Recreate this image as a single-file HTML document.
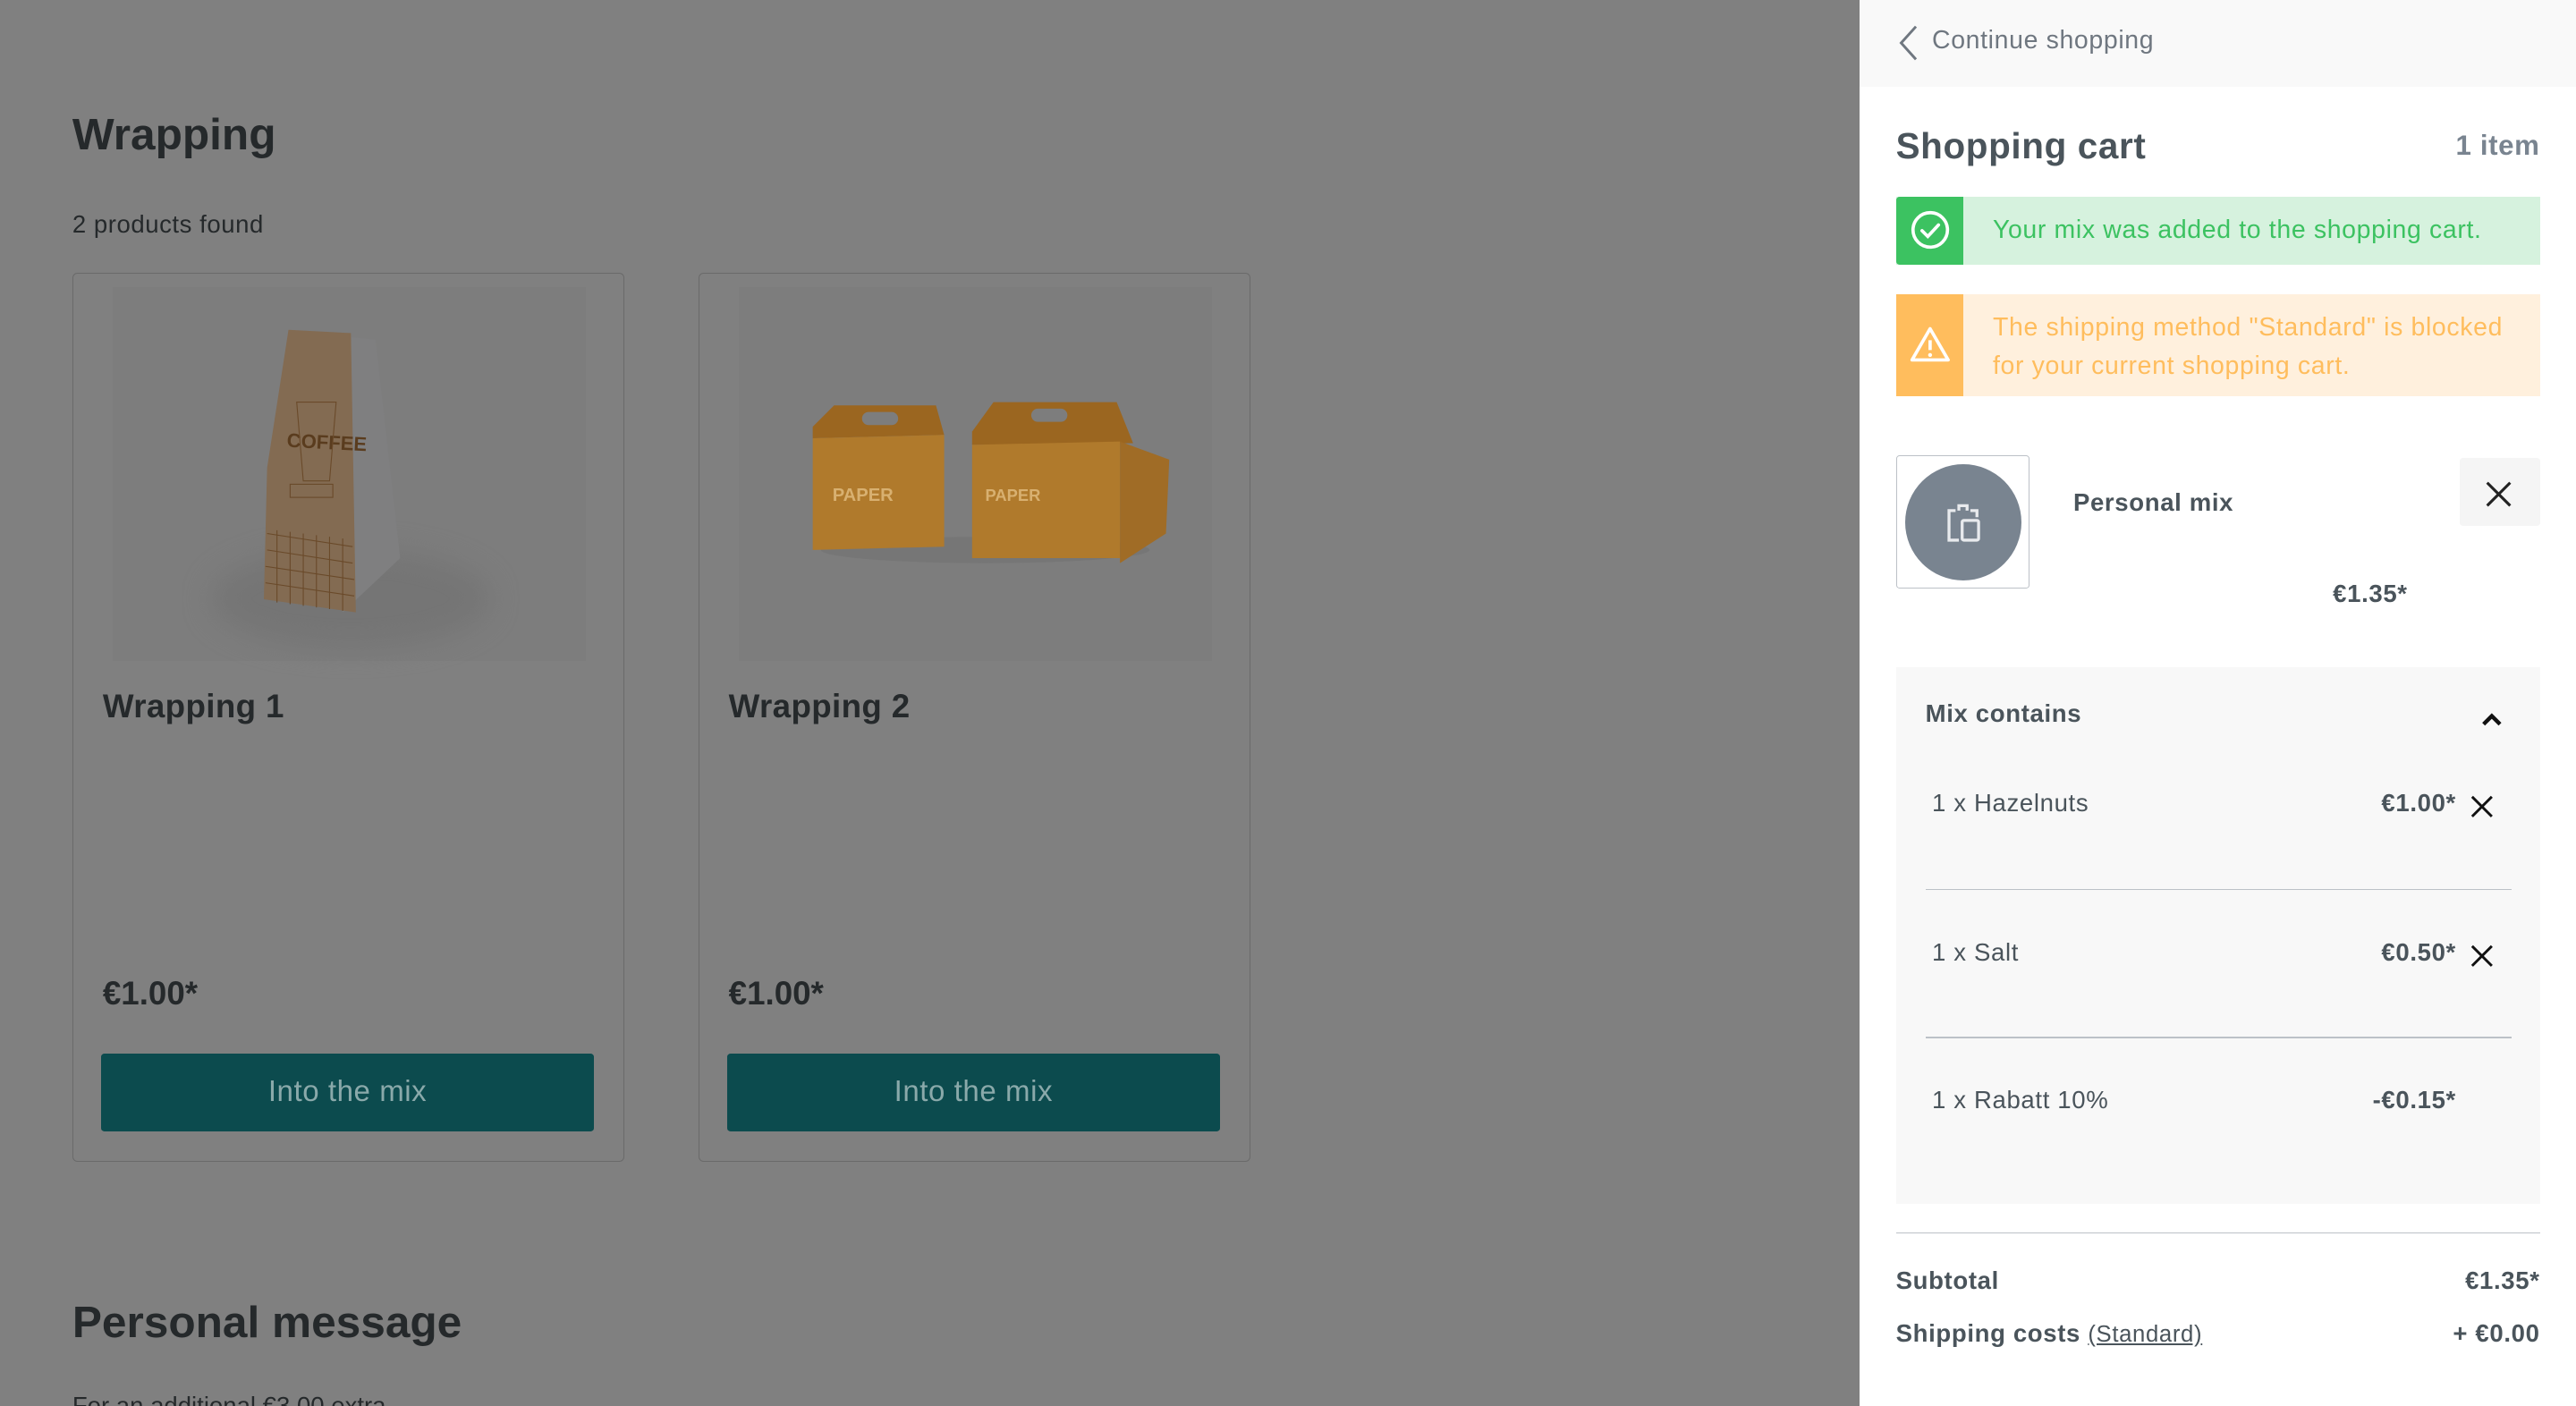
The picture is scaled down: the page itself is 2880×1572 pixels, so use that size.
<!DOCTYPE html>
<html style="background:#808080;overflow:hidden;height:1572px"><head><meta charset="utf-8"><style>
html,body{margin:0;padding:0;}
body{width:1568px;height:856px;overflow:hidden;zoom:1.83674;position:relative;background:#808080;font-family:"Liberation Sans",sans-serif;}
.a{position:absolute;white-space:nowrap;}
.dk{color:#25292b;}
.card{position:absolute;top:166px;width:335px;height:540px;border:1px solid #6a6a6a;border-radius:3px;}
.img{position:absolute;left:24px;top:8px;width:288px;height:228px;background:#7d7d7d;}
.btn{position:absolute;left:17px;top:475px;width:300px;height:47px;background:#0c4b4e;border-radius:2px;color:#8aa9aa;font-size:18px;text-align:center;line-height:47px;letter-spacing:0.3px;}
.panel{position:absolute;left:1132px;top:0;width:436px;height:870px;background:#fff;letter-spacing:0.35px;}
.g{color:#4a545b;}
</style></head><body>
<div class="a dk" style="left:44px;top:66px;font-size:27px;font-weight:bold;">Wrapping</div>
<div class="a dk" style="left:44px;top:128px;font-size:15px;letter-spacing:0.3px;">2 products found</div>

<div class="card" style="left:44px;">
 <div class="img">
  <div style="position:absolute;left:60px;top:160px;width:170px;height:60px;border-radius:50%;background:#757575;filter:blur(8px);"></div>
  <svg width="288" height="228" style="position:absolute;left:0;top:0">
   <polygon points="140,30 160,32 175,165 140,198" fill="#7f7f80"/>
   <polygon points="107,26 145,28 148,198 92,190 94,110" fill="#836b52"/>
   <text x="106" y="98" font-size="12" font-weight="bold" fill="#5a3c1e" font-family="Liberation Sans" transform="rotate(3 120 95)">COFFEE</text>
   <g stroke="#6a4a2a" stroke-width="0.6" fill="none">
    <path d="M94 150 L146 158 M94 160 L146 168 M93 170 L147 178 M93 180 L147 188"/>
    <path d="M100 148 V192 M108 149 V193 M116 150 V194 M124 151 V195 M132 152 V196 M140 153 V197"/>
    <rect x="108" y="120" width="26" height="8"/>
    <path d="M112 70 h24 l-4 48 h-16 z"/>
   </g>
  </svg>
 </div>
 <div class="a dk" style="left:18px;top:252px;font-size:20px;font-weight:bold;letter-spacing:0.2px;">Wrapping 1</div>
 <div class="a dk" style="left:18px;top:427px;font-size:20px;font-weight:bold;">€1.00*</div>
 <div class="btn">Into the mix</div>
</div>

<div class="card" style="left:425px;">
 <div class="img">
  <svg width="288" height="228" style="position:absolute;left:0;top:0">
   <ellipse cx="150" cy="160" rx="100" ry="8" fill="#767676"/>
   <polygon points="45,85 58,72 120,72 125,90 45,92" fill="#9b6620"/>
   <polygon points="45,92 125,90 125,158 45,160" fill="#b07a2c"/>
   <rect x="75" y="76" width="22" height="8" rx="4" fill="#7d7d7d"/>
   <polygon points="142,88 155,70 230,70 240,95 142,96" fill="#9b6620"/>
   <polygon points="142,96 232,94 232,165 142,165" fill="#b07a2c"/>
   <polygon points="232,94 262,105 260,150 232,168" fill="#a06c26"/>
   <rect x="178" y="74" width="22" height="8" rx="4" fill="#7d7d7d"/>
   <text x="57" y="130" font-size="11" font-weight="bold" fill="#d8b070" font-family="Liberation Sans">PAPER</text>
   <text x="150" y="130" font-size="10" font-weight="bold" fill="#d8b070" font-family="Liberation Sans">PAPER</text>
  </svg>
 </div>
 <div class="a dk" style="left:18px;top:252px;font-size:20px;font-weight:bold;letter-spacing:0.2px;">Wrapping 2</div>
 <div class="a dk" style="left:18px;top:427px;font-size:20px;font-weight:bold;">€1.00*</div>
 <div class="btn">Into the mix</div>
</div>

<div class="a dk" style="left:44px;top:789px;font-size:27px;font-weight:bold;">Personal message</div>
<div class="a dk" style="left:44px;top:847px;font-size:15px;">For an additional €3.00 extra</div>

<div class="panel">
 <div style="position:absolute;left:0;top:0;width:436px;height:53px;background:#f9f9f9;"></div>
 <svg class="a" style="left:22px;top:14px" width="14" height="24"><path d="M12 2 L3 12 L12 22" stroke="#6f7780" stroke-width="1.6" fill="none"/></svg>
 <div class="a" style="left:44px;top:16px;font-size:15.5px;color:#6f7780;">Continue shopping</div>
 <div class="a g" style="left:22px;top:76px;font-size:22px;font-weight:bold;">Shopping cart</div>
 <div class="a" style="right:22px;top:79px;font-size:17px;font-weight:bold;color:#798490;">1 item</div>

 <div style="position:absolute;left:22px;top:120px;width:392px;height:41px;background:#d6f2de;">
  <div style="position:absolute;left:0;top:0;width:41px;height:41px;background:#3cc261;border-radius:2px 0 0 2px;"></div>
  <svg class="a" style="left:9px;top:8px" width="24" height="24"><circle cx="12" cy="12" r="10.5" stroke="#fff" stroke-width="2" fill="none"/><path d="M7 12.5 L10.5 16 L17 9" stroke="#fff" stroke-width="2" fill="none" stroke-linecap="round"/></svg>
  <div class="a" style="left:59px;top:11px;font-size:15.5px;color:#3cc261;">Your mix was added to the shopping cart.</div>
 </div>
 <div style="position:absolute;left:22px;top:179px;width:392px;height:62px;background:#fff0dd;">
  <div style="position:absolute;left:0;top:0;width:41px;height:62px;background:#ffbd5d;"></div>
  <svg class="a" style="left:8px;top:18px" width="26" height="26"><path d="M13 3 L24 22 H2 Z" stroke="#fff" stroke-width="2" fill="none" stroke-linejoin="round"/><path d="M13 10 V16" stroke="#fff" stroke-width="2"/><circle cx="13" cy="19" r="1.2" fill="#fff"/></svg>
  <div class="a" style="left:59px;top:9px;font-size:15.5px;line-height:23px;color:#ffbd5d;">The shipping method "Standard" is blocked<br>for your current shopping cart.</div>
 </div>

 <div style="position:absolute;left:22px;top:277px;width:80px;height:80px;border:1px solid #bcc1c7;border-radius:2px;">
  <div style="position:absolute;left:5px;top:5px;width:71px;height:71px;border-radius:50%;background:#798490;"></div>
  <svg class="a" style="left:26px;top:26px" width="30" height="30"><path d="M10 7 H6 V25 H12 M12 7 V4 H17 V7 M19 7 H23 V11" stroke="#e8eaed" stroke-width="1.8" fill="none"/><rect x="14" y="13" width="10" height="12" rx="1" stroke="#e8eaed" stroke-width="1.8" fill="none"/></svg>
 </div>
 <div class="a g" style="left:130px;top:297px;font-size:15px;font-weight:bold;">Personal mix</div>
 <div style="position:absolute;left:365px;top:279px;width:49px;height:41px;background:#f5f5f5;border-radius:2px;"></div>
 <svg class="a" style="left:380px;top:292px" width="18" height="18"><path d="M2 2 L16 16 M16 2 L2 16" stroke="#222" stroke-width="1.7"/></svg>
 <div class="a g" style="left:288px;top:353px;font-size:15px;font-weight:bold;">€1.35*</div>

 <div style="position:absolute;left:22px;top:406px;width:392px;height:327px;background:#f8f8f8;">
  <div class="a g" style="left:18px;top:20px;font-size:15px;font-weight:bold;">Mix contains</div>
  <svg class="a" style="left:356px;top:27px" width="14" height="10"><path d="M2 8 L7 3 L12 8" stroke="#111" stroke-width="2.4" fill="none"/></svg>
  <div class="a g" style="left:22px;top:74px;font-size:15px;">1 x Hazelnuts</div>
  <div class="a g" style="right:51px;top:74px;font-size:15px;font-weight:bold;">€1.00*</div>
  <svg class="a" style="left:350px;top:78px" width="14" height="14"><path d="M1 1 L13 13 M13 1 L1 13" stroke="#111" stroke-width="1.6"/></svg>
  <div style="position:absolute;left:18px;top:135px;width:357px;height:1px;background:#bcc1c7;"></div>
  <div class="a g" style="left:22px;top:165px;font-size:15px;">1 x Salt</div>
  <div class="a g" style="right:51px;top:165px;font-size:15px;font-weight:bold;">€0.50*</div>
  <svg class="a" style="left:350px;top:169px" width="14" height="14"><path d="M1 1 L13 13 M13 1 L1 13" stroke="#111" stroke-width="1.6"/></svg>
  <div style="position:absolute;left:18px;top:225px;width:357px;height:1px;background:#bcc1c7;"></div>
  <div class="a g" style="left:22px;top:255px;font-size:15px;">1 x Rabatt 10%</div>
  <div class="a g" style="right:51px;top:255px;font-size:15px;font-weight:bold;">-€0.15*</div>
 </div>
 <div style="position:absolute;left:22px;top:750px;width:392px;height:1px;background:#bcc1c7;"></div>
 <div class="a g" style="left:22px;top:771px;font-size:15px;font-weight:bold;">Subtotal</div>
 <div class="a g" style="right:22px;top:771px;font-size:15px;font-weight:bold;">€1.35*</div>
 <div class="a g" style="left:22px;top:803px;font-size:15px;"><b>Shipping costs</b> <span style="font-size:14px;text-decoration:underline;">(Standard)</span></div>
 <div class="a g" style="right:22px;top:803px;font-size:15px;font-weight:bold;">+ €0.00</div>
</div>
</body></html>
